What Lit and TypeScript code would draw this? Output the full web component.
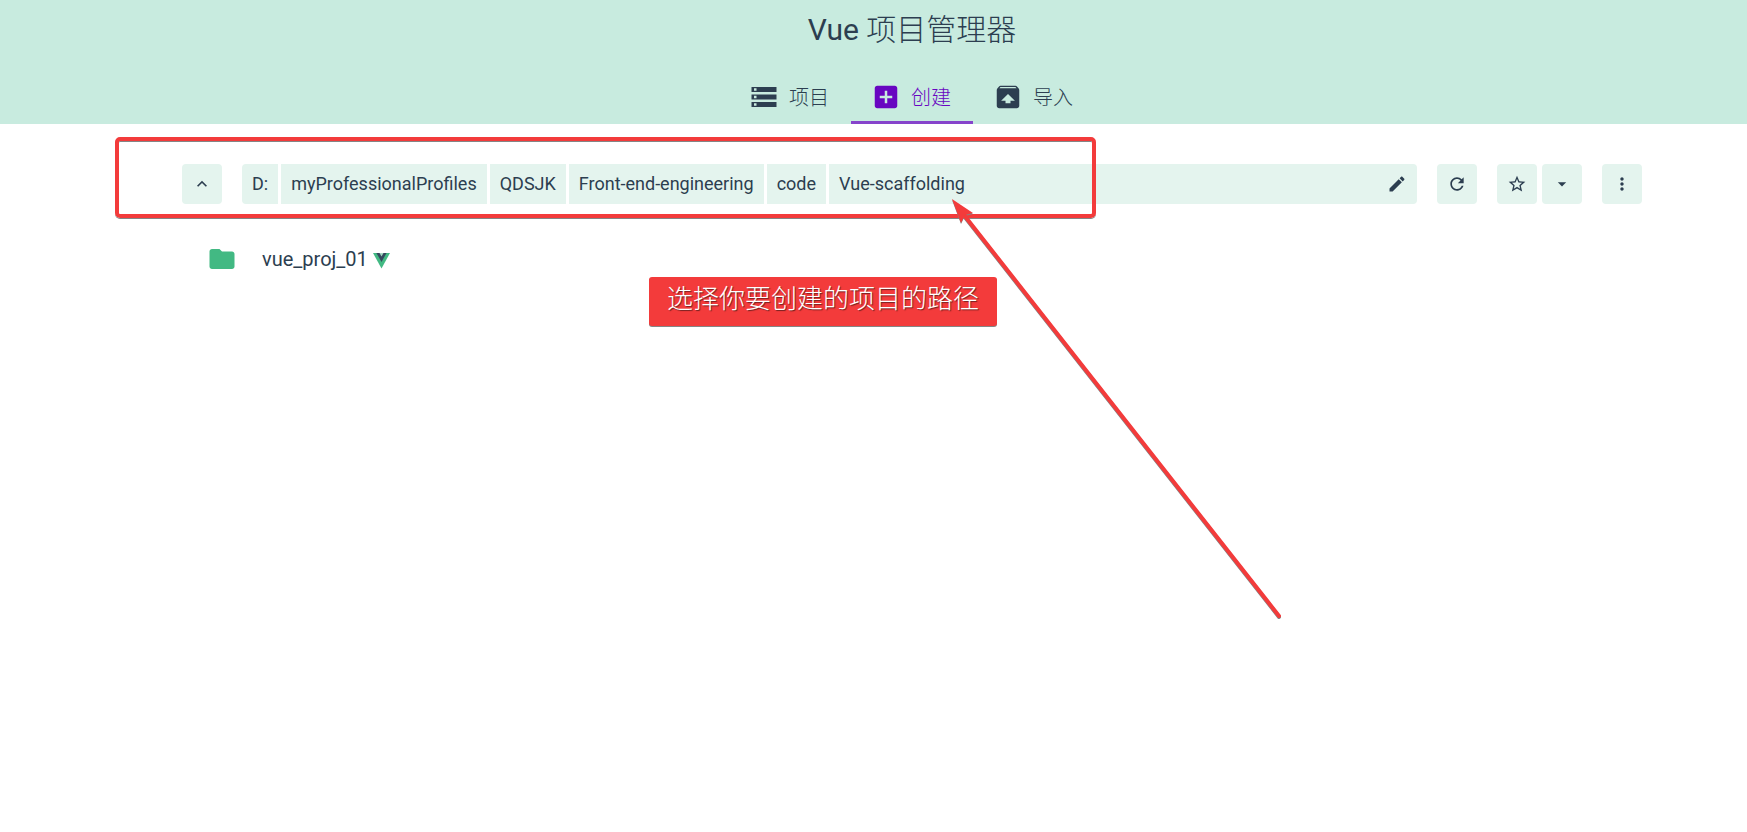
import { LitElement, html, css, svg } from "lit";
import { customElement, property, state } from "lit/decorators.js";

const icons: Record<string, string> = {
  storage: "M2 20h20v-4H2v4zm2-3h2v2H4v-2zM2 4v4h20V4H2zm4 3H4V5h2v2zm-4 7h20v-4H2v4zm2-3h2v2H4v-2z",
  add: "M19 3H5c-1.11 0-2 .9-2 2v14c0 1.1.89 2 2 2h14c1.1 0 2-.9 2-2V5c0-1.1-.9-2-2-2zm-2 10h-4v4h-2v-4H7v-2h4V7h2v4h4v2z",
  unarchive: "M20.55 5.22l-1.39-1.68C18.88 3.21 18.47 3 18 3H6c-.47 0-.88.21-1.15.55L3.46 5.22C3.17 5.57 3 6.01 3 6.5V19c0 1.1.89 2 2 2h14c1.1 0 2-.9 2-2V6.500c0-.49-.17-.93-.45-1.280zM12 9.500l5.500 5.500H14v2h-4v-2H6.500L12 9.500zM5.120 5l.82-1h12l.93 1H5.120z",
  up: "M12 8l-6 6 1.410 1.410L12 10.830l4.590 4.580L18 14z",
  edit: "M3 17.250V21h3.750L17.810 9.940l-3.750-3.750L3 17.250zM20.710 7.040c.39-.39.39-1.020 0-1.410l-2.340-2.340c-.39-.39-1.020-.39-1.410 0l-1.830 1.830 3.750 3.750 1.830-1.830z",
  refresh: "M17.650 6.350C16.200 4.900 14.210 4 12 4c-4.420 0-7.990 3.580-7.990 8s3.570 8 7.990 8c3.730 0 6.840-2.550 7.730-6h-2.080c-.82 2.330-3.040 4-5.650 4-3.310 0-6-2.690-6-6s2.690-6 6-6c1.660 0 3.140.69 4.220 1.780L13 11h7V4l-2.350 2.350z",
  star: "M22 9.240l-7.190-.62L12 2 9.190 8.630 2 9.240l5.460 4.730L5.820 21 12 17.270 18.180 21l-1.630-7.030L22 9.240zM12 15.400l-3.760 2.270 1-4.280-3.320-2.880 4.380-.38L12 6.100l1.710 4.040 4.380.38-3.320 2.880 1 4.280L12 15.400z",
  dropdown: "M7 10l5 5 5-5z",
  more: "M12 8c1.100 0 2-.9 2-2s-.9-2-2-2-2 .9-2 2 .9 2 2 2zm0 2c-1.100 0-2 .9-2 2s.9 2 2 2 2-.9 2-2-.9-2-2-2zm0 6c-1.100 0-2 .9-2 2s.9 2 2 2 2-.9 2-2-.9-2-2-2z",
  folder: "M10 4H4c-1.100 0-1.990.9-1.990 2L2 18c0 1.100.9 2 2 2h16c1.100 0 2-.9 2-2V8c0-1.100-.9-2-2-2h-8l-2-2z",
};

@customElement("ui-icon")
class UiIcon extends LitElement {
  @property() name = "";
  static styles = css`
    :host { display: block; width: 20px; height: 20px; flex: none; }
    .glyph { display: block; width: 100%; height: 100%; fill: currentColor; }
  `;
  render() {
    return html`<svg class="glyph" viewBox="0 0 24 24" aria-hidden="true">${svg`<path d=${icons[this.name]}></path>`}</svg>`;
  }
}

@customElement("app-root")
class AppRoot extends LitElement {
  @state() private tab = "create";
  private tabs = [
    { id: "projects", icon: "storage", label: "项目" },
    { id: "create", icon: "add", label: "创建" },
    { id: "import", icon: "unarchive", label: "导入" },
  ];
  private path = ["D:", "myProfessionalProfiles", "QDSJK", "Front-end-engineering", "code", "Vue-scaffolding"];

  static styles = css`
    :host {
      display: block;
      position: relative;
      min-height: 100vh;
      overflow: hidden;
      background: #fff;
      color: #2c3e50;
      font-family: Roboto, "Noto Sans CJK SC", sans-serif;
      font-size: 20px;
    }
    * { box-sizing: border-box; }
    button { border: 0; margin: 0; padding: 0; background: none; color: inherit; font: inherit; cursor: pointer; }
    .header { background: #c8ebdf; padding-left: 77px; display: flex; flex-direction: column; align-items: center; }
    .title { margin: 0; height: 74px; padding-top: 10px; font-size: 30px; line-height: 40px; font-weight: 300; }
    .latin { font-weight: 400; }
    .tabs { display: flex; }
    .tab { display: flex; align-items: center; gap: 10px; height: 50px; padding: 0 22px 2px 20px; font-weight: 300; border-bottom: 3px solid transparent; }
    .tab.active { color: #6806c1; border-bottom-color: #8644cb; }
    .large { width: 30px; height: 30px; }
    .content { padding: 40px 105px 0 182px; }
    .toolbar { display: flex; gap: 20px; }
    .square { display: flex; align-items: center; justify-content: center; width: 40px; height: 40px; background: #e4f4ee; border-radius: 4px; }
    .pair { display: flex; gap: 5px; }
    .path { flex: 1; display: flex; gap: 3px; height: 40px; border-radius: 4px; overflow: hidden; font-size: 18px; }
    .part { padding: 0 10px 2px; background: #e4f4ee; white-space: nowrap; }
    .rest { flex: 1; display: flex; align-items: stretch; justify-content: space-between; background: #e4f4ee; }
    .edit { padding: 10px; }
    .folders { list-style: none; margin: 0; padding: 35px 25px; }
    .folder { display: flex; align-items: center; height: 40px; }
    .folder .large { color: #42b983; }
    .name { margin-left: 25px; color: inherit; text-decoration: none; }
    .vue { width: 17px; height: 17px; margin: 2px 0 0 5px; }
    .frame { position: absolute; left: 115px; top: 137px; width: 981px; height: 81px; border: 4px solid #f33b3b; border-radius: 5px; box-shadow: 0 1px 0 #858585, inset 0 1px 0 #858585; pointer-events: none; }
    .note { position: absolute; left: 649px; top: 277px; height: 49px; margin: 0; padding: 0 18px; border-radius: 3px; background: #f33b3b; box-shadow: 0 1px 0 #858585; color: #fff; font: 300 26px/40px "Noto Sans CJK SC", sans-serif; text-shadow: 1px 1px 1px #702020; white-space: nowrap; }
    .arrow { position: absolute; left: 940px; top: 190px; width: 350px; height: 440px; pointer-events: none; }
  `;

  render() {
    const last = this.path.length - 1;
    return html`
      <header class="header">
        <h1 class="title"><span class="latin">Vue</span> 项目管理器</h1>
        <nav class="tabs">
          ${this.tabs.map((t) => html`
            <button class="tab ${t.id === this.tab ? "active" : ""}" @click=${() => (this.tab = t.id)}>
              <ui-icon class="large" name=${t.icon}></ui-icon><span>${t.label}</span>
            </button>`)}
        </nav>
      </header>
      <main class="content">
        <div class="toolbar">
          <button class="square" aria-label="Parent folder"><ui-icon name="up"></ui-icon></button>
          <div class="path">
            ${this.path.slice(0, last).map((p) => html`<button class="part">${p}</button>`)}
            <div class="rest">
              <button class="part">${this.path[last]}</button>
              <button class="edit" aria-label="Edit path"><ui-icon name="edit"></ui-icon></button>
            </div>
          </div>
          <button class="square" aria-label="Refresh"><ui-icon name="refresh"></ui-icon></button>
          <div class="pair">
            <button class="square" aria-label="Favorite"><ui-icon name="star"></ui-icon></button>
            <button class="square" aria-label="Favorite folders"><ui-icon name="dropdown"></ui-icon></button>
          </div>
          <button class="square" aria-label="More"><ui-icon name="more"></ui-icon></button>
        </div>
        <ul class="folders">
          <li class="folder">
            <ui-icon class="large" name="folder"></ui-icon>
            <a class="name" href="#vue_proj_01">vue_proj_01</a>
            <svg class="vue" viewBox="0 0 17 17" aria-hidden="true">
              <path fill="#42b983" d="M0 1h17L8.500 16.500z"></path>
              <path fill="#35495e" d="M3.400 1h10.200L8.500 10z"></path>
              <path fill="#a5d8c2" d="M6.500 1h4L8.500 4.500z"></path>
            </svg>
          </li>
        </ul>
      </main>
      <div class="frame"></div>
      <p class="note">选择你要创建的项目的路径</p>
      <svg class="arrow" viewBox="0 0 350 440" aria-hidden="true">
        <g stroke="#858585" fill="#858585" transform="translate(0 1)">
          <path d="M24 25L339 426" stroke-width="4" stroke-linecap="round"></path>
          <path stroke="none" d="M12 9L33 23L25 25L21 33z"></path>
        </g>
        <path d="M24 25L339 426" stroke="#f33b3b" stroke-width="4" stroke-linecap="round"></path>
        <path fill="#f33b3b" d="M12 9L33 23L25 25L21 33z"></path>
      </svg>
    `;
  }
}
